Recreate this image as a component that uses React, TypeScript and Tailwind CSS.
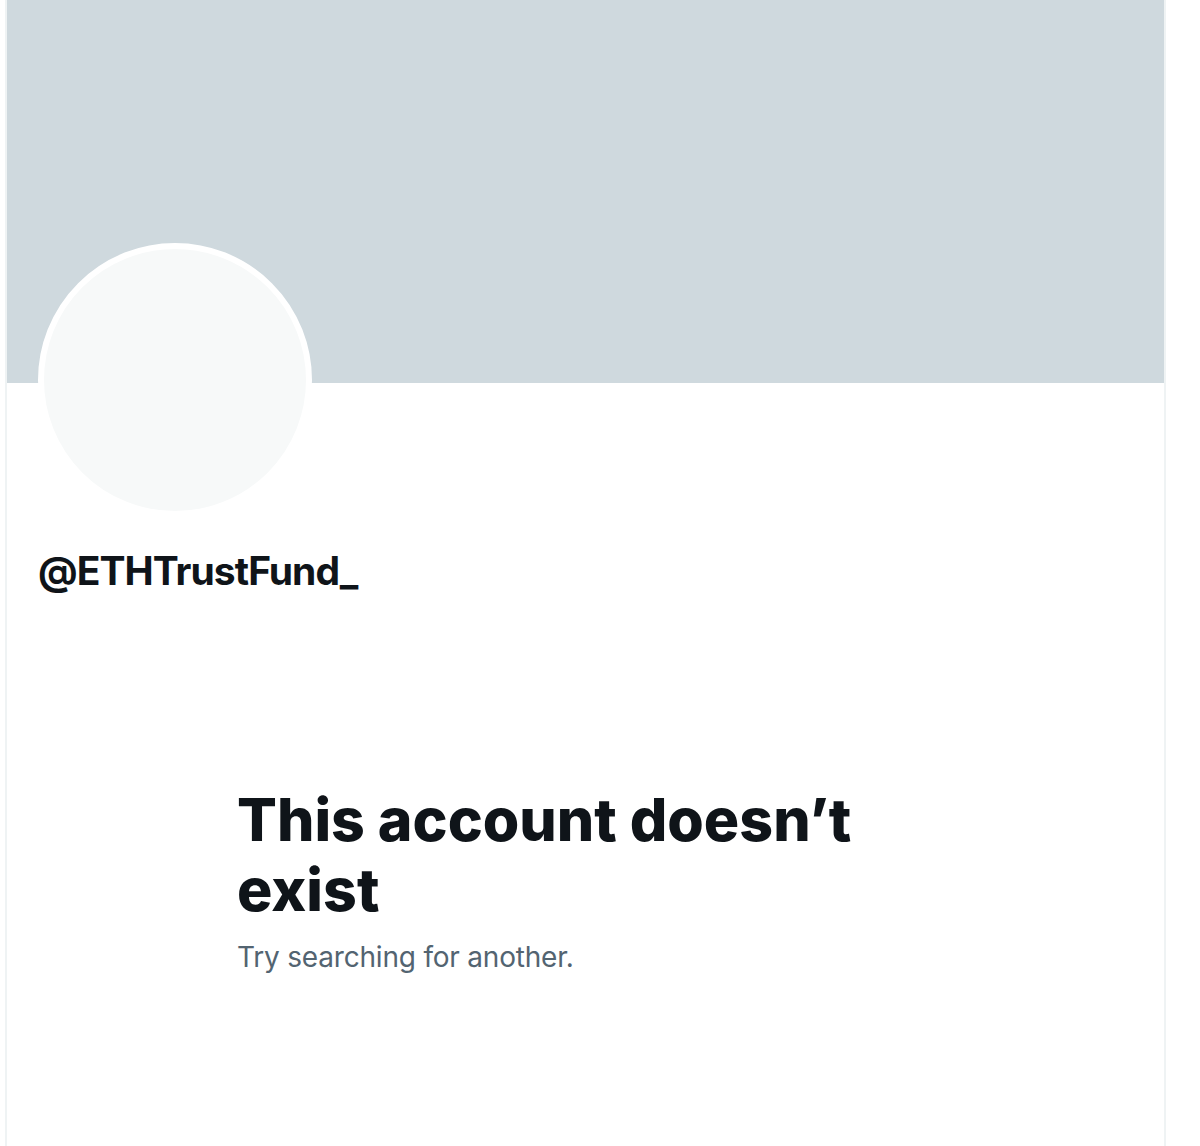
import React from 'react';

const App: React.FC = () => {
  return (
    <div className="w-[1200px] h-[1146px] bg-white overflow-hidden font-['Inter','Liberation_Sans',Arial,sans-serif]">
      <div className="ml-[5px] w-[1161px] h-full border-x-2 border-[#eff3f4] flex flex-col">
        {/* Banner */}
        <div className="h-[383px] bg-[#cfd9de] shrink-0" />

        {/* Profile header */}
        <div className="pl-[31px]">
          <div className="-mt-[140px] w-[274px] h-[274px] rounded-full border-[6px] border-white bg-[#f7f9f9]" />
          <div className="mt-[30px] text-[39px] leading-[48px] font-bold text-[#0f1419] tracking-[-0.95px]">
            @ETHTrustFund_
          </div>
        </div>

        {/* Empty state */}
        <div className="pl-[230px] mt-[190px]">
          <div className="max-w-[660px]">
            <h2 className="text-[59px] leading-[70px] font-extrabold text-[#0f1419] tracking-[0px]">
              This account doesn’t exist
            </h2>
            <p className="mt-[14px] text-[28px] leading-[36px] text-[#536471] tracking-[-0.2px]">
              Try searching for another.
            </p>
          </div>
        </div>
      </div>
    </div>
  );
};

export default App;
